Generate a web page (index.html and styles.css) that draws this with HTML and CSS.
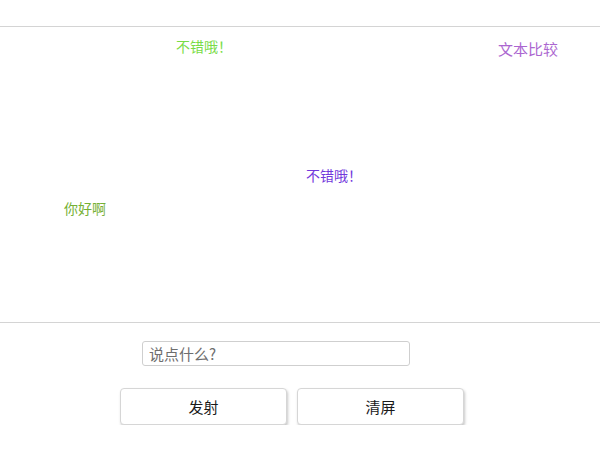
FILE: index.html
```html
<!DOCTYPE html>
<html lang="zh-CN">
<head>
  <meta charset="UTF-8">
  <meta name="viewport" content="width=device-width, initial-scale=1.0">
  <title>弹幕</title>
  <link rel="stylesheet" href="styles.css">
</head>
<body>
  <!-- 弹幕屏幕 -->
  <div class="screen" id="screen">
    <span class="dm dm-green" style="left: 176px; top: 9px;">不错哦！</span>
    <span class="dm dm-lilac" style="left: 498px; top: 12px;">文本比较</span>
    <span class="dm dm-violet" style="left: 306px; top: 138px;">不错哦！</span>
    <span class="dm dm-olive" style="left: 64px; top: 171px;">你好啊</span>
  </div>

  <div class="controls">
    <input type="text" class="say" id="say" placeholder="说点什么?" autofocus>
    <div class="btns">
      <button class="btn" id="send">发射</button>
      <button class="btn" id="clear">清屏</button>
    </div>
  </div>
</body>
</html>
```

FILE: styles.css
```css
/* Reset básico */
body, html {
  margin: 0;
  padding: 0;
  font-family: "Noto Sans CJK SC", "Liberation Sans", sans-serif;
}

body {
  background: #fff;
}

.screen {
  position: relative;
  margin-top: 26px;
  height: 295px;
  border-top: 1px solid #d4d4d4;
  border-bottom: 1px solid #d4d4d4;
  overflow: hidden;
}

.dm {
  position: absolute;
  font-family: "Noto Sans CJK JP", "Noto Sans CJK SC", sans-serif;
  font-size: 14px;
  line-height: 20px;
  white-space: nowrap;
}

.dm-green { color: #78dc46; }
.dm-lilac { color: #ab66d0; font-size: 15px; }
.dm-violet { color: #7238dc; }
.dm-olive { color: #76b034; }

.controls {
  padding: 18px 0 0 120px;
}

.say {
  display: block;
  box-sizing: border-box;
  margin-left: 22px;
  width: 268px;
  height: 25px;
  padding: 0 6px;
  border: 1px solid #cfcfcf;
  border-radius: 3px;
  font-family: inherit;
  font-size: 15px;
  color: #333;
  outline: none;
}

.say::placeholder {
  color: #6e6e6e;
}

.btns {
  display: flex;
  gap: 10px;
  margin-top: 22px;
}

.btn {
  width: 167px;
  height: 37px;
  background: #fff;
  border: 1px solid #d6d6d6;
  border-radius: 4px;
  box-shadow: 1px 2px 3px rgba(0, 0, 0, 0.22);
  font-family: inherit;
  font-size: 15px;
  color: #1a1a1a;
  cursor: pointer;
}
```
